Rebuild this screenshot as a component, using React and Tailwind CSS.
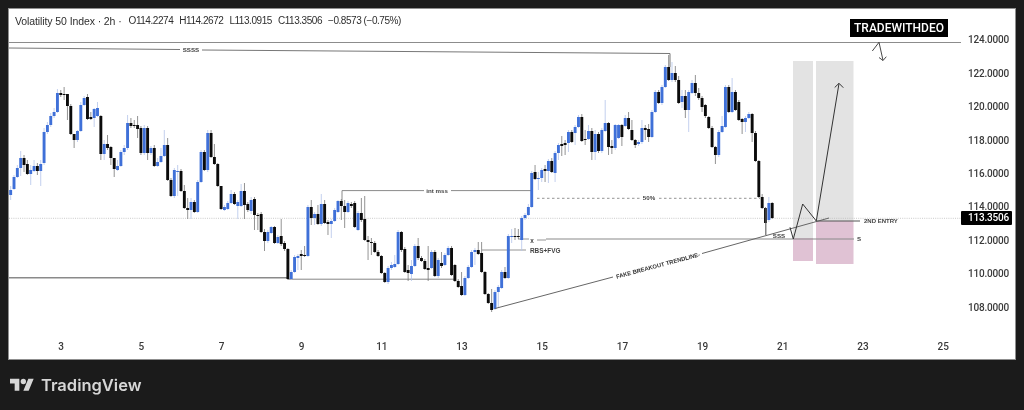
const CANDLES = [
  ['b',190,195,186,200],['b',177,189,175,190],['b',168,177,165,178],['b',158,168,151,176],['k',158,165,155,172],
  ['k',164,174,160,175],['b',170,174,165,185],['b',166,171,160,172],['k',166,171,163,175],['b',164,171,160,186],
  ['b',132,163,128,165],['b',125,132,122,134],['b',116,125,113,127],['b',112,116,108,118],['b',93,112,89,113],
  ['k',93,95,90,97],['k',94,95,87,100],['k',94,106,94,120],['k',106,134,104,135],['k',134,140,134,148],
  ['b',131,140,130,142],['b',105,131,102,132],['b',98,105,96,106],['k',97,119,94,120],['k',117,119,112,120],
  ['b',109,118,108,127],['b',108,116,102,117],['k',116,154,115,160],['b',144,154,140,160],['k',144,148,135,150],
  ['k',147,158,146,165],['k',158,169,158,177],['b',166,170,160,171],['b',152,166,150,167],['b',148,152,145,155],
  ['b',123,148,115,150],['k',123,126,118,128],['k',125,126,120,128],['k',125,129,116,138],['k',128,153,126,155],
  ['b',128,153,125,155],['k',128,153,126,160],['b',148,153,146,155],['k',148,166,145,167],['b',162,166,158,167],
  ['b',156,162,148,163],['b',145,156,130,157],['k',145,180,138,181],['k',180,196,178,197],['b',170,196,168,198],
  ['b',171,172,165,196],['k',171,191,169,192],['k',191,208,185,209],['k',208,210,198,219],['b',202,210,198,219],
  ['k',202,212,200,213],['b',182,212,180,213],['b',152,182,150,183],['k',152,170,150,171],['b',133,170,130,172],
  ['k',133,157,130,158],['k',157,164,144,165],['k',164,186,163,187],['k',186,209,186,210],['b',207,210,205,211],
  ['b',203,209,201,210],['b',194,203,190,204],['k',194,204,192,205],['b',202,206,200,219],['b',191,206,184,207],
  ['k',191,205,183,219],['k',204,210,202,212],['b',200,211,197,214],['k',199,215,197,230],['k',215,216,213,230],
  ['k',214,232,212,233],['k',232,241,229,251],['b',232,241,230,243],['b',227,233,226,234],['k',227,243,226,244],
  ['b',237,243,235,244],['k',236,244,219,246],['k',243,249,241,251],['k',249,279,248,280],['b',272,279,270,280],
  ['b',257,272,255,273],['b',256,258,254,270],['k',254,256,250,270],['k',255,256,246,257],['b',207,256,205,257],
  ['k',207,218,200,225],['b',214,218,212,225],['k',214,224,205,225],['b',204,224,194,226],['k',204,223,200,224],
  ['k',222,224,220,235],['b',221,224,219,238],['b',210,221,208,222],['b',201,212,200,213],['k',201,206,199,220],
  ['k',206,212,200,228],['b',203,212,201,213],['k',204,206,202,208],['k',203,227,201,228],['b',213,230,211,231],
  ['k',213,220,198,222],['k',219,240,196,241],['k',240,242,236,260],['k',242,243,238,255],['k',243,252,241,253],
  ['k',252,256,250,257],['k',256,273,255,274],['k',273,282,272,283],['b',268,282,266,284],['b',265,268,262,270],
  ['b',264,267,255,268],['b',232,264,230,265],['k',232,250,231,252],['k',249,272,247,273],['k',270,273,265,281],
  ['b',266,274,260,281],['b',246,266,244,267],['k',246,258,238,260],['k',258,261,256,262],['k',261,269,259,270],
  ['k',268,270,246,281],['b',252,268,250,269],['k',252,276,250,277],['b',260,276,258,278],['k',263,266,252,268],
  ['b',255,265,253,266],['b',248,255,246,256],['k',248,275,246,276],['k',265,281,264,282],['k',281,287,279,288],
  ['k',286,295,272,296],['b',278,295,276,296],['b',267,278,265,279],['b',252,267,250,268],['b',250,252,248,265],
  ['k',250,254,242,255],['k',253,272,242,273],['k',272,294,271,295],['k',294,303,293,304],['k',303,310,289,312],
  ['b',292,309,290,310],['b',287,292,285,308],['b',272,288,270,289],['k',272,278,267,279],['b',236,278,234,279],
  ['b',236,237,229,243],['k',236,237,228,240],['k',236,237,229,239],['b',218,240,216,251],['b',215,218,213,220],
  ['b',207,215,204,216],['b',173,207,171,208],['k',172,179,165,180],['b',178,179,172,190],['b',170,178,168,182],
  ['k',169,171,165,182],['b',161,171,159,183],['k',161,172,158,173],['b',153,173,151,182],['b',145,153,143,160],
  ['k',144,146,136,156],['k',143,145,140,155],['b',132,143,130,152],['k',132,142,130,143],['b',127,133,125,145],
  ['b',117,127,115,128],['k',117,141,114,142],['k',139,140,130,145],['b',131,139,125,140],['k',131,152,128,160],
  ['b',134,152,130,160],['k',134,151,132,153],['b',130,151,128,153],['b',123,131,100,132],['k',123,147,122,155],
  ['k',146,148,140,154],['b',125,148,124,150],['b',125,138,124,139],['k',125,137,124,146],['b',118,126,115,127],
  ['k',118,129,112,130],['k',130,140,120,141],['k',140,145,139,148],['b',142,144,140,146],['b',128,142,120,144],
  ['k',128,130,125,140],['k',129,137,124,142],['b',112,137,110,138],['b',92,112,90,113],['k',92,103,90,104],
  ['b',87,103,85,105],['b',67,87,65,88],['k',67,80,55,81],['b',73,80,62,82],['k',73,80,66,82],
  ['k',80,103,76,104],['b',96,102,90,108],['k',96,110,90,118],['b',92,110,90,132],['b',83,93,80,94],
  ['k',83,93,75,96],['k',93,98,88,100],['k',98,107,96,112],['k',105,116,104,118],['k',117,128,116,129],
  ['k',128,147,126,148],['k',147,155,146,164],['b',132,155,130,157],['b',126,132,116,133],['b',87,127,85,128],
  ['k',87,112,85,113],['b',92,112,78,113],['k',92,110,90,111],['k',102,120,100,121],['k',119,122,118,134],
  ['b',118,122,116,132],['b',114,118,112,119],['k',114,133,113,142],['k',133,161,131,162],['k',161,197,160,198],
  ['k',197,208,194,209],['k',208,223,207,235],['b',203,220,197,222],['k',203,218,202,219],
]

const PRICES = ['124.0000', '122.0000', '120.0000', '118.0000', '116.0000', '114.0000', '112.0000', '110.0000', '108.0000']
const DAYS = [3, 5, 7, 9, 11, 13, 15, 17, 19, 21, 23, 25]
const OHLC = ['O114.2274', 'H114.2672', 'L113.0915', 'C113.3506', '−0.8573 (−0.75%)']

const Candles = () => (
  <g>
    {CANDLES.map(([color, top, bottom, wickTop, wickBottom], i) => {
      const x = 10.67 + i * 3.34
      const isBlue = color === 'b'
      return (
        <g key={i}>
          <line x1={x} x2={x} y1={wickTop} y2={wickBottom} stroke={isBlue ? '#b4c4ea' : '#777777'} strokeWidth="0.8" />
          <rect x={x - 1.45} y={top} width="2.9" height={Math.max(bottom - top, 1)} fill={isBlue ? '#3f70d8' : '#0b0b0b'} />
        </g>
      )
    })}
  </g>
)

const Label = ({ x, y, children, anchor = 'middle', size = 6.2 }) => (
  <text x={x} y={y} textAnchor={anchor} dominantBaseline="central" fontSize={size} fill="#444" fontFamily="Liberation Sans, sans-serif" fontWeight="700">
    {children}
  </text>
)

const Chart = () => (
  <svg viewBox="9 9 952 326" className="absolute inset-0 w-[952px] h-[326px]">
    {/* zones */}
    <rect x="793" y="61" width="20" height="177" fill="#e3e3e3" />
    <rect x="816" y="61" width="37.5" height="160" fill="#e3e3e3" />
    <rect x="793" y="238" width="20" height="23" fill="#e0c2d4" />
    <rect x="816" y="221" width="37.5" height="43" fill="#e0c2d4" />

    {/* current price */}
    <line x1="9" x2="961" y1="218.3" y2="218.3" stroke="#bdbdbd" strokeWidth="0.8" strokeDasharray="1 1.2" />

    {/* levels */}
    <line x1="9" x2="961" y1="42.5" y2="42.5" stroke="#8c8c8c" strokeWidth="1.1" />
    <polyline points="9,48 180,49.5" fill="none" stroke="#777" strokeWidth="1" />
    <polyline points="202,50 670,53.5 670,67" fill="none" stroke="#777" strokeWidth="1" />
    <Label x={191} y={49.8}>SSSS</Label>
    <polyline points="342,201 342,190.6 424,190.6" fill="none" stroke="#8a8a8a" strokeWidth="1" />
    <line x1="451" x2="533" y1="190.6" y2="190.6" stroke="#8a8a8a" strokeWidth="1" />
    <Label x={437} y={190.4}>int mss</Label>
    <line x1="537" x2="640" y1="198.3" y2="198.3" stroke="#777" strokeWidth="0.8" strokeDasharray="2.5 2.5" />
    <line x1="659" x2="760" y1="198.3" y2="198.3" stroke="#777" strokeWidth="0.8" strokeDasharray="2.5 2.5" />
    <Label x={649} y={197.8}>50%</Label>
    <line x1="9" x2="288" y1="277.8" y2="277.8" stroke="#8a8a8a" strokeWidth="1.4" />
    <line x1="288" x2="455" y1="279.2" y2="279.2" stroke="#777" strokeWidth="0.9" />
    <line x1="518" x2="529" y1="239" y2="239" stroke="#888" strokeWidth="0.9" />
    <line x1="537" x2="546" y1="240" y2="240" stroke="#888" strokeWidth="0.9" />
    <line x1="546" x2="854" y1="239" y2="239" stroke="#8a8a8a" strokeWidth="1.2" />
    <Label x={532} y={240.5} size={6.4}>x</Label>
    <Label x={859} y={238.6}>S</Label>
    <line x1="482" x2="526" y1="250" y2="250" stroke="#888" strokeWidth="0.9" />
    <Label x={530} y={250} anchor="start" size={6.4}>RBS+FVG</Label>

    <Candles />

    {/* trendline */}
    <line x1="495" y1="308.5" x2="613" y2="277" stroke="#666" strokeWidth="1" />
    <line x1="702" y1="253.5" x2="829" y2="218" stroke="#666" strokeWidth="1" />
    <text x="658" y="265.5" textAnchor="middle" dominantBaseline="central" fontSize="5.8" fill="#333" fontFamily="Liberation Sans, sans-serif" fontWeight="700" transform="rotate(-15 658 265.5)">
      FAKE BREAKOUT TRENDLINE-
    </text>
    <line x1="766" x2="766" y1="208" y2="235" stroke="#777" strokeWidth="0.9" />
    <Label x={779} y={235}>SSS</Label>

    {/* projected path */}
    <polyline points="790,227.3 793.3,239 802.7,204 816.3,221 839,83.5" fill="none" stroke="#333" strokeWidth="1" />
    <polyline points="834.7,87.5 839,83.3 843.3,87.7" fill="none" stroke="#333" strokeWidth="1" />
    <line x1="816" x2="860" y1="221" y2="221" stroke="#555" strokeWidth="1" />
    <Label x={864} y={220.7} anchor="start" size={6}>2ND ENTRY</Label>

    {/* little arrow under the badge */}
    <polyline points="872.3,51 879,42.3 883,60.3" fill="none" stroke="#333" strokeWidth="0.9" />
    <polyline points="879,57.5 883,60.5 886.3,56.7" fill="none" stroke="#333" strokeWidth="0.9" />
  </svg>
)

export default function App() {
  return (
    <div className="w-[1024px] h-[410px] bg-[#1b1b1b] flex flex-col pt-2 px-2 font-['Liberation_Sans',sans-serif]">
      <div className="relative h-[352px] w-[1008px] bg-white border border-[#8f8f8f] grid grid-cols-[952px_54px] grid-rows-[326px_24px] shrink-0 blur-[0.35px]">
        <div className="relative">
          <Chart />
          {/* legend */}
          <div className="absolute top-[6px] left-[6px] flex items-center gap-[6px] text-[10.5px] leading-[12px] text-[#2e2e2e] whitespace-nowrap">
            <span className="tracking-[-0.1px] mr-[1px]">Volatility 50 Index · 2h ·</span>
            {OHLC.map((v) => (
              <span key={v} className="text-[10px] tracking-[-0.45px]">{v}</span>
            ))}
          </div>
          <div className="absolute top-[10px] left-[841px] w-[98px] h-[18px] bg-black text-white font-['Roboto',sans-serif] text-[12px] font-medium leading-[18px] text-center">
            TRADEWITHDEO
          </div>
        </div>

        {/* price axis */}
        <div className="relative flex flex-col pt-[14.3px] font-['Roboto',sans-serif] text-[10px] font-medium tracking-[-0.2px] text-[#3a3a3a]">
          {PRICES.map((p) => (
            <div key={p} className="h-[33.4px] shrink-0 flex items-center pl-[7px]">{p}</div>
          ))}
          <div className="absolute top-[202px] left-0 w-[51px] h-[14px] bg-black text-white leading-[14px] pl-[7px] rounded-[1px]">
            113.3506
          </div>
        </div>

        {/* time axis */}
        <div className="flex pl-[12px] font-['Roboto',sans-serif] text-[10px] font-medium text-[#3a3a3a]">
          {DAYS.map((d) => (
            <div key={d} className="w-[80.2px] shrink-0 text-center leading-[22px] pt-[1px]">{d}</div>
          ))}
        </div>
        <div />
      </div>

      {/* footer */}
      <div className="flex items-center h-[50px] pl-[2px] gap-[7px] text-[#d6d6d6] blur-[0.35px]">
        <svg viewBox="0 0 36 28" className="w-[24px] h-[19px] fill-current">
          <path d="M14 22H7V11H0V4h14v18zM28 22h-8l7.5-18h8L28 22z" />
          <circle cx="20" cy="8" r="4" />
        </svg>
        <span className="font-['Inter',sans-serif] text-[16.5px] font-semibold">TradingView</span>
      </div>
    </div>
  )
}
